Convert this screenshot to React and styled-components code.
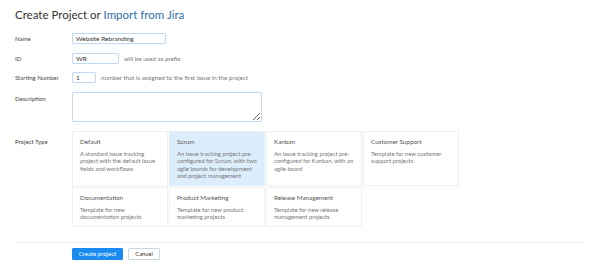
import React, { useState } from 'react';
import styled, { createGlobalStyle } from 'styled-components';

const GlobalStyle = createGlobalStyle`
  body {
    margin: 0;
    background: #fff;
    font-family: Lato, "Open Sans", sans-serif;
    color: #333;
  }
`;

const projectTypes = [
  { name: 'Default', desc: 'A standard issue tracking project with the default issue fields and workflows' },
  { name: 'Scrum', desc: 'An issue tracking project pre-configured for Scrum, with two agile boards for development and project management' },
  { name: 'Kanban', desc: 'An issue tracking project pre-configured for Kanban, with an agile board' },
  { name: 'Customer Support', desc: 'Template for new customer support projects' },
  { name: 'Documentation', desc: 'Template for new documentation projects' },
  { name: 'Product Marketing', desc: 'Template for new product marketing projects' },
  { name: 'Release Management', desc: 'Template for new release management projects' }
];

export default function App () {
  const [selected, setSelected] = useState('Scrum');

  return (
    <Page>
      <GlobalStyle />
      <Title>Create Project or <Link>Import from Jira</Link></Title>

      <Form>
        <Label>Name</Label>
        <Field>
          <Input width={94} defaultValue="Website Rebranding" />
        </Field>

        <Label>ID</Label>
        <Field>
          <Input width={47} defaultValue="WR" />
          <Hint>will be used as prefix</Hint>
        </Field>

        <Label>Starting Number</Label>
        <Field>
          <Input width={24} defaultValue="1" />
          <Hint>number that is assigned to the first issue in the project</Hint>
        </Field>

        <Label top={3}>Description</Label>
        <Field>
          <TextArea />
        </Field>

        <Label top={7} spaced>Project Type</Label>
        <Field spaced>
          <Cards>
            {projectTypes.map(type => (
              <Card
                key={type.name}
                active={selected === type.name}
                onClick={() => setSelected(type.name)}
              >
                <CardTitle>{type.name}</CardTitle>
                <CardDesc>{type.desc}</CardDesc>
              </Card>
            ))}
          </Cards>
        </Field>
      </Form>

      <Divider />

      <Actions>
        <PrimaryButton>Create project</PrimaryButton>
        <Button>Cancel</Button>
      </Actions>
    </Page>
  );
}

const Page = styled.div`
  width: 600px;
  height: 273px;
  padding: 7px 15px 0 15px;
  box-sizing: border-box;
  overflow: hidden;
`;

const Title = styled.h1`
  margin: 0 0 10px 0;
  font-size: 11.5px;
  font-weight: 400;
  line-height: 16px;
  color: #333;
`;

const Link = styled.span`
  color: #2f6fab;
`;

const Form = styled.div`
  display: grid;
  grid-template-columns: 57px 1fr;
  row-gap: 8.5px;
`;

const Label = styled.div`
  font-size: 6px;
  color: #444;
  display: flex;
  align-items: ${props => props.top ? 'flex-start' : 'center'};
  padding-top: ${props => props.top || 0}px;
  margin-top: ${props => props.spaced ? '0.5px' : '0'};
`;

const Field = styled.div`
  display: flex;
  align-items: center;
  gap: 5px;
  margin-top: ${props => props.spaced ? '0.5px' : '0'};
`;

const Input = styled.input`
  width: ${props => props.width}px;
  height: 11px;
  box-sizing: border-box;
  border: 1px solid #c5d9ee;
  border-radius: 1px;
  padding: 0 3px;
  font-family: inherit;
  font-size: 6.5px;
  color: #333;
  outline: none;
`;

const Hint = styled.span`
  font-size: 6.2px;
  color: #777;
`;

const TextArea = styled.textarea`
  width: 190px;
  height: 30px;
  box-sizing: border-box;
  border: 1px solid #c5d9ee;
  border-radius: 1px;
  font-family: inherit;
  font-size: 6.5px;
  outline: none;
  resize: vertical;
  margin: 0;
  display: block;
`;

const Cards = styled.div`
  display: grid;
  grid-template-columns: repeat(4, 96px);
  gap: 1px;
`;

const Card = styled.div`
  box-sizing: border-box;
  padding: 6px 4px 5px 7px;
  background: ${props => props.active ? '#dcedfc' : '#fff'};
  border: 1px solid ${props => props.active ? '#dcedfc' : '#eef0f2'};
  cursor: pointer;
`;

const CardTitle = styled.div`
  font-size: 6.3px;
  line-height: 8px;
  color: #555;
  margin-bottom: 4px;
`;

const CardDesc = styled.div`
  font-size: 5.9px;
  line-height: 7.5px;
  color: #777;
`;

const Divider = styled.div`
  height: 1px;
  background: #eeeeee;
  margin-top: 15px;
  width: 570px;
`;

const Actions = styled.div`
  display: flex;
  gap: 5px;
  padding-left: 57px;
  margin-top: 5px;
`;

const Button = styled.button`
  height: 12px;
  padding: 0;
  box-sizing: border-box;
  font-family: inherit;
  font-size: 6px;
  background: #fff;
  color: #333;
  border: 1px solid #c9d6e3;
  border-radius: 1px;
  width: 32px;
`;

const PrimaryButton = styled(Button)`
  background: #1a8cf0;
  border-color: #1a8cf0;
  color: #fff;
  width: 51px;
`;
